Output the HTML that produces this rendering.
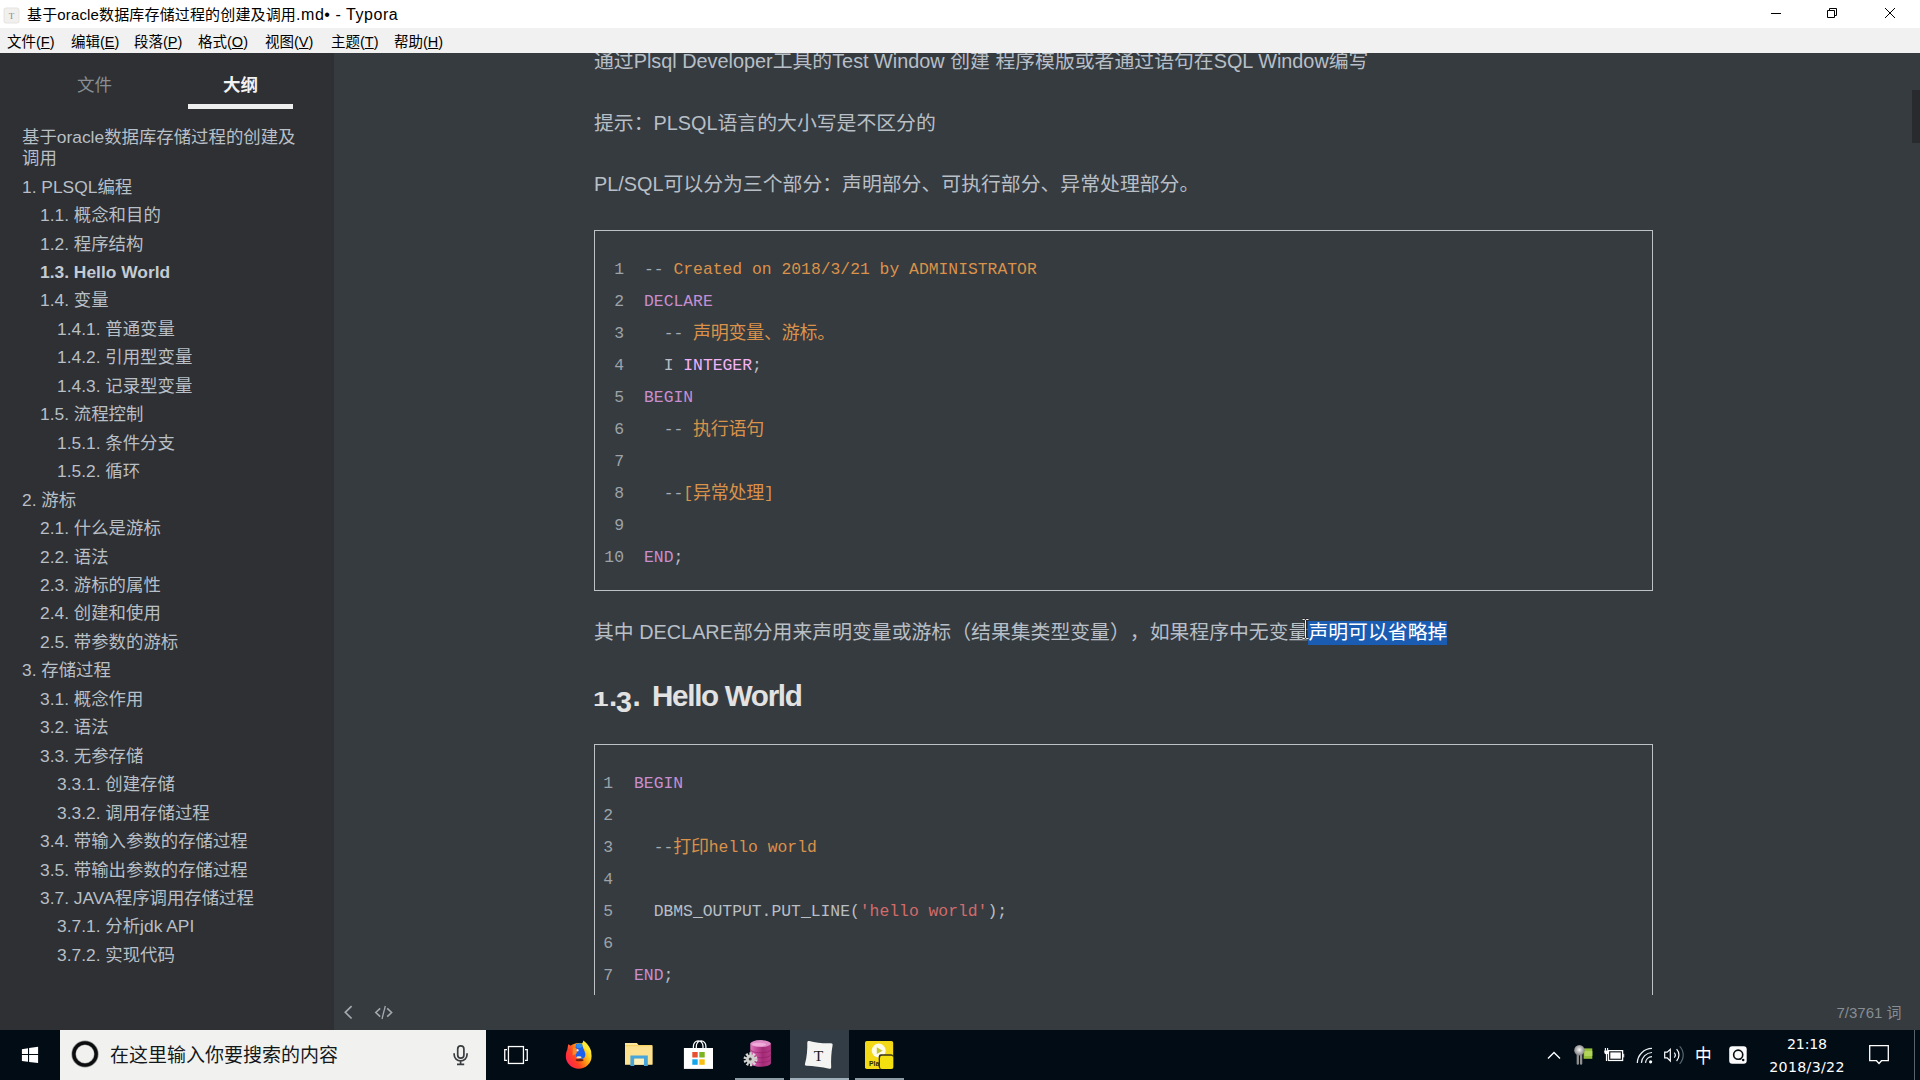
<!DOCTYPE html>
<html lang="zh-CN">
<head>
<meta charset="utf-8">
<title>基于oracle数据库存储过程的创建及调用.md - Typora</title>
<style>
*{box-sizing:border-box;margin:0;padding:0}
html,body{width:1920px;height:1080px;overflow:hidden;background:#363b40}
body{position:relative;text-spacing-trim:space-all;font-family:"Liberation Sans","Noto Sans CJK SC",sans-serif;color:#b8bfc6}
.abs{position:absolute}
/* ---------- title bar ---------- */
#titlebar{position:absolute;left:0;top:0;width:1920px;height:28px;background:#fff;color:#000}
#titlebar .ttl{position:absolute;left:27px;top:4px;font-size:15px;line-height:22px;white-space:nowrap;letter-spacing:.15px}
#menubar{position:absolute;left:0;top:28px;width:1920px;height:25px;background:#f0f1f0;color:#000}
#menubar span{position:absolute;top:3px;font-size:14.5px;line-height:22px;white-space:nowrap}
/* ---------- sidebar ---------- */
#sidebar{position:absolute;left:0;top:53px;width:334px;height:977px;background:#2e3033;color:#b8bfc6}
#sidebar .tab{position:absolute;top:19.6px;font-size:17.5px;line-height:24px;white-space:nowrap}
#sidebar .tabline{position:absolute;left:188px;top:51px;width:105px;height:5px;background:#eeeeee}
.ol{position:absolute;font-size:17.4px;line-height:21px;white-space:nowrap;color:#b8bfc6}
.ol.b{font-weight:bold;color:#c4cbd2}
/* ---------- content ---------- */
#content{position:absolute;left:334px;top:53px;width:1586px;height:942px;background:#363b40;overflow:hidden}
.p{position:absolute;left:260px;font-size:19.85px;line-height:30px;white-space:nowrap;color:#b8bfc6}
.fence{position:absolute;left:260px;width:1059px;border:1px solid #bcc2c6;font-family:"Liberation Mono","Noto Sans CJK SC",monospace;font-size:16.37px}
.fence .ln{position:absolute;height:32px;line-height:32px;white-space:pre;color:#b8bfc6}
.fence .n{position:absolute;color:#9da3a8;text-align:right;height:32px;line-height:32px}
.d{color:#a4abb1}.k{color:#c88fd0}.c{color:#da924a}.s{color:#d26b6b}.bi{color:#f3b3f8}
.cj{font-family:"Noto Sans CJK SC",sans-serif;font-size:18px;letter-spacing:-.25px;line-height:0;position:relative;top:1px}
h3{position:absolute;left:260px;font-size:29.6px;line-height:40px;color:#e2e2e2;font-weight:bold;white-space:nowrap;letter-spacing:-1.3px}
.os{position:absolute;top:0;line-height:40px;letter-spacing:0}.hw{position:absolute;left:58px;top:0}
.sel{background:#1b5cb3;color:#fff;padding-bottom:2px}
#footer{position:absolute;left:334px;top:995px;width:1586px;height:35px;background:#363b40}
/* ---------- taskbar ---------- */
#taskbar{position:absolute;left:0;top:1030px;width:1920px;height:50px;background:#020c15}
#search{position:absolute;left:60px;top:0;width:426px;height:50px;background:#f1f2f0;color:#1f2a33}
#search .t{position:absolute;left:50px;top:13px;font-size:19px;color:#15181b;line-height:26px;white-space:nowrap}
</style>
</head>
<body>
<!-- TITLE BAR -->
<div id="titlebar">
  <svg class="abs" style="left:3px;top:6.5px" width="17" height="17" viewBox="0 0 16 16"><rect x="1" y="1" width="14" height="14" rx="2" fill="#f1f0ee" stroke="#e6e4e0" stroke-width="1"/><text x="8" y="11.2" font-size="8.5" text-anchor="middle" fill="#888" font-family="Liberation Serif,serif">T</text></svg>
  <div class="ttl">基于oracle数据库存储过程的创建及调用<span style="font-size:16px;letter-spacing:.55px">.md• - Typora</span></div>
  <svg class="abs" style="left:1760px;top:0" width="160" height="28" viewBox="0 0 160 28" fill="none" stroke="#000" stroke-width="1">
    <path d="M11 13.5h10"/>
    <path d="M67.5 10.5h7v7h-7z M69.5 10.5v-2h7v7h-2"/>
    <path d="M125 8l10 10M135 8l-10 10"/>
  </svg>
</div>
<div id="menubar">
  <span style="left:7px">文件(<u>F</u>)</span>
  <span style="left:71px">编辑(<u>E</u>)</span>
  <span style="left:134px">段落(<u>P</u>)</span>
  <span style="left:198px">格式(<u>O</u>)</span>
  <span style="left:265px">视图(<u>V</u>)</span>
  <span style="left:331px">主题(<u>T</u>)</span>
  <span style="left:394px">帮助(<u>H</u>)</span>
</div>

<!-- SIDEBAR -->
<div id="sidebar">
  <div class="tab" style="left:77px;color:#8a8f94">文件</div>
  <div class="tab" style="left:223px;color:#f2f2f2;font-weight:bold">大纲</div>
  <div class="tabline"></div>
  <div class="ol" style="left:22px;top:73.5px">基于oracle数据库存储过程的创建及<br>调用</div>
  <div class="ol" style="left:22px;top:123.5px">1. PLSQL编程</div>
  <div class="ol" style="left:40px;top:152.0px">1.1. 概念和目的</div>
  <div class="ol" style="left:40px;top:180.5px">1.2. 程序结构</div>
  <div class="ol b" style="left:40px;top:208.9px">1.3. Hello World</div>
  <div class="ol" style="left:40px;top:237.4px">1.4. 变量</div>
  <div class="ol" style="left:57px;top:265.8px">1.4.1. 普通变量</div>
  <div class="ol" style="left:57px;top:294.3px">1.4.2. 引用型变量</div>
  <div class="ol" style="left:57px;top:322.7px">1.4.3. 记录型变量</div>
  <div class="ol" style="left:40px;top:351.2px">1.5. 流程控制</div>
  <div class="ol" style="left:57px;top:379.6px">1.5.1. 条件分支</div>
  <div class="ol" style="left:57px;top:408.1px">1.5.2. 循环</div>
  <div class="ol" style="left:22px;top:436.6px">2. 游标</div>
  <div class="ol" style="left:40px;top:465.0px">2.1. 什么是游标</div>
  <div class="ol" style="left:40px;top:493.5px">2.2. 语法</div>
  <div class="ol" style="left:40px;top:521.9px">2.3. 游标的属性</div>
  <div class="ol" style="left:40px;top:550.4px">2.4. 创建和使用</div>
  <div class="ol" style="left:40px;top:578.8px">2.5. 带参数的游标</div>
  <div class="ol" style="left:22px;top:607.3px">3. 存储过程</div>
  <div class="ol" style="left:40px;top:635.7px">3.1. 概念作用</div>
  <div class="ol" style="left:40px;top:664.2px">3.2. 语法</div>
  <div class="ol" style="left:40px;top:692.6px">3.3. 无参存储</div>
  <div class="ol" style="left:57px;top:721.1px">3.3.1. 创建存储</div>
  <div class="ol" style="left:57px;top:749.6px">3.3.2. 调用存储过程</div>
  <div class="ol" style="left:40px;top:778.0px">3.4. 带输入参数的存储过程</div>
  <div class="ol" style="left:40px;top:806.5px">3.5. 带输出参数的存储过程</div>
  <div class="ol" style="left:40px;top:834.9px">3.7. JAVA程序调用存储过程</div>
  <div class="ol" style="left:57px;top:863.4px">3.7.1. 分析jdk API</div>
  <div class="ol" style="left:57px;top:891.8px">3.7.2. 实现代码</div>
</div>

<!-- CONTENT -->
<div id="content">
  <div class="p" style="top:-7px">通过Plsql Developer工具的Test Window 创建 程序模版或者通过语句在SQL Window编写</div>
  <div class="p" style="top:55px">提示：PLSQL语言的大小写是不区分的</div>
  <div class="p" style="top:116px">PL/SQL可以分为三个部分：声明部分、可执行部分、异常处理部分。</div>
  <div class="fence" style="top:177px;height:361px">
  <div class="n" style="left:0;width:29px;top:23px">1</div><div class="ln" style="left:49px;top:23px"><span class="d">--</span><span class="c"> Created on 2018/3/21 by ADMINISTRATOR</span></div>
  <div class="n" style="left:0;width:29px;top:55px">2</div><div class="ln" style="left:49px;top:55px"><span class="k">DECLARE</span></div>
  <div class="n" style="left:0;width:29px;top:87px">3</div><div class="ln" style="left:49px;top:87px">  <span class="d">--</span><span class="c"> <span class="cj">声明变量、游标。</span></span></div>
  <div class="n" style="left:0;width:29px;top:119px">4</div><div class="ln" style="left:49px;top:119px">  I <span class="bi">INTEGER</span>;</div>
  <div class="n" style="left:0;width:29px;top:151px">5</div><div class="ln" style="left:49px;top:151px"><span class="k">BEGIN</span></div>
  <div class="n" style="left:0;width:29px;top:183px">6</div><div class="ln" style="left:49px;top:183px">  <span class="d">--</span><span class="c"> <span class="cj">执行语句</span></span></div>
  <div class="n" style="left:0;width:29px;top:215px">7</div><div class="ln" style="left:49px;top:215px"></div>
  <div class="n" style="left:0;width:29px;top:247px">8</div><div class="ln" style="left:49px;top:247px">  <span class="d">--</span><span class="c">[<span class="cj">异常处理</span>]</span></div>
  <div class="n" style="left:0;width:29px;top:279px">9</div><div class="ln" style="left:49px;top:279px"></div>
  <div class="n" style="left:0;width:29px;top:311px">10</div><div class="ln" style="left:49px;top:311px"><span class="k">END</span>;</div>
  </div>
  <div class="p" style="top:564px">其中 DECLARE部分用来声明变量或游标（结果集类型变量），如果程序中无变量<span class="sel">声明可以省略掉</span></div>
  <h3 style="top:623px"><span class="os" style="left:-1px;top:2.9px;font-size:.7em;transform:scaleX(1.35);transform-origin:0 50%">1</span><span class="os" style="left:15px">.</span><span class="os" style="left:22px;top:6.3px;font-size:.97em">3</span><span class="os" style="left:38.500px">.</span> <span class="hw">Hello World</span></h3>
  <div class="fence" style="top:691px;height:300px">
  <div class="n" style="left:0;width:18px;top:23px">1</div><div class="ln" style="left:39px;top:23px"><span class="k">BEGIN</span></div>
  <div class="n" style="left:0;width:18px;top:55px">2</div><div class="ln" style="left:39px;top:55px"></div>
  <div class="n" style="left:0;width:18px;top:87px">3</div><div class="ln" style="left:39px;top:87px">  <span class="d">--</span><span class="c"><span class="cj">打印</span>hello world</span></div>
  <div class="n" style="left:0;width:18px;top:119px">4</div><div class="ln" style="left:39px;top:119px"></div>
  <div class="n" style="left:0;width:18px;top:151px">5</div><div class="ln" style="left:39px;top:151px">  DBMS_OUTPUT.PUT_LINE(<span class="s">'hello world'</span>);</div>
  <div class="n" style="left:0;width:18px;top:183px">6</div><div class="ln" style="left:39px;top:183px"></div>
  <div class="n" style="left:0;width:18px;top:215px">7</div><div class="ln" style="left:39px;top:215px"><span class="k">END</span>;</div>
  <div class="n" style="left:0;width:18px;top:247px">8</div><div class="ln" style="left:39px;top:247px"></div>
  </div>
</div>
<div class="abs" style="left:1912px;top:90px;width:8px;height:53px;background:#282a2e"></div>
<svg class="abs" style="left:1300px;top:617px" width="11" height="24" viewBox="0 0 11 24" fill="none"><path d="M2.500 2.500h2.200l.8.800.800-.800h2.200M5.500 3.300v17.400M2.500 21.500h2.200l.800-.800.800.800h2.200" stroke="#1a1a1a" stroke-width="2.100"/><path d="M2.500 2.500h2.200l.8.800.800-.800h2.200M5.500 3.300v17.400M2.500 21.500h2.200l.800-.800.800.800h2.200" stroke="#fff" stroke-width=".95"/></svg>
<div id="footer">
  <svg class="abs" style="left:0;top:0" width="70" height="35" viewBox="0 0 70 35" fill="none" stroke="#a2a9af" stroke-width="1.700">
    <path d="M17.600 11.200L11.300 17.300l6.300 6.200"/>
    <path d="M46.200 13.400L41.800 17.500l4.400 4.200M53.200 13.400l4.400 4.100-4.400 4.200" stroke-width="1.600"/><path d="M51.300 11L48 24" stroke-width="1.300"/>
  </svg>
  <div class="abs" style="right:18.5px;top:7px;font-size:15px;line-height:22px;color:#868d93;white-space:nowrap">7/3761 词</div>
</div>

<!-- TASKBAR -->
<div id="taskbar">
  <svg class="abs" style="left:10px;top:5px" width="40" height="40" viewBox="0 0 40 40"><path fill="#fff" d="M11.900 14.200L18 13.200V18.900H11.900zM19.100 13L28.100 11.800V18.900H19.100zM11.900 20H18V26.800L11.900 25.900zM19.100 20H28.100V28.100L19.100 27z"/></svg>
  <div id="search">
    <svg class="abs" style="left:10px;top:9px" width="30" height="30" viewBox="0 0 30 30"><circle cx="15" cy="15" r="11.300" fill="none" stroke="#8d8f8e" stroke-width="4.600"/><circle cx="15" cy="15" r="11.200" fill="none" stroke="#0b0d0e" stroke-width="3.300"/></svg>
    <div class="t">在这里输入你要搜索的内容</div>
    <svg class="abs" style="left:390px;top:12px" width="22" height="26" viewBox="0 0 22 26" fill="none" stroke="#3a3d40" stroke-width="1.700"><rect x="7.700" y="3.900" width="6.200" height="12.200" rx="3.100"/><path d="M4.150 11.300v1.200a6.450 6.450 0 0 0 12.900 0v-1.200M10.600 19v3M7 22.300h7.200"/></svg>
  </div>
  <!-- task view -->
  <svg class="abs" style="left:503px;top:15px" width="26" height="20" viewBox="0 0 26 20" fill="none" stroke="#fff" stroke-width="1.300"><rect x="5.450" y="1.550" width="15" height="16.900"/><path d="M4 4.550H1.750v10.900H4M22 4.550h2.250v10.900H22"/></svg>
  <!-- firefox -->
  <svg class="abs" style="left:558px;top:5px" width="40" height="40" viewBox="0 0 40 40">
    <defs><linearGradient id="ffg" x1="0.080" y1="0.720" x2="0.950" y2="0.220"><stop offset="0" stop-color="#ff2748"/><stop offset="0.300" stop-color="#ff4322"/><stop offset="0.580" stop-color="#ff9412"/><stop offset="0.820" stop-color="#ffd426"/><stop offset="1" stop-color="#fff14d"/></linearGradient></defs>
    <circle cx="20.700" cy="20.900" r="12.900" fill="url(#ffg)"/>
    <path d="M23.300 9.500C24.600 8.400 25.100 7 25.300 5.600 28.500 8 32.300 12 33.500 17.500L28 15z" fill="#ffe936"/>
    <path d="M10.200 9.300L13.800 11.300 9.300 15z" fill="#ff5436"/>
    <path d="M18 9.300C20 8.100 22.600 8.200 24.100 9.100 24.500 12 26 14.600 27 17.500 28 20.500 26.900 23 24.500 23.800 22 24.100 19.500 23.100 18 21.500 17.300 18 17.200 13 18 9.300z" fill="#1c60ee"/>
    <ellipse cx="21.200" cy="10.800" rx="3" ry="2.300" fill="#2a8de8"/>
    <path d="M15 12.500c2-.3 3.500.500 4.300 2.200l-1 4.300-3.800 1.500z" fill="#ff8a26"/>
    <ellipse cx="19.600" cy="15.200" rx="1" ry="1.300" fill="#d9e6ff"/>
    <ellipse cx="21" cy="22.300" rx="2.600" ry="1" fill="#ffe7bd"/>
    <ellipse cx="21.600" cy="25.200" rx="3.900" ry="1.100" fill="#6b1a14"/>
  </svg>
  <!-- explorer -->
  <svg class="abs" style="left:618px;top:5px" width="40" height="40" viewBox="0 0 40 40">
    <path d="M7 8h11.800l1.800 2H34.400v19.600H7z" fill="#f6d362"/>
    <path d="M7 11.200h27.400v18.400H7z" fill="#fbe190"/>
    <path d="M7 8h11.600l1.600 2H7z" fill="#fbe79f"/>
    <path d="M12.400 20.400h17.400v10.500h-3.900v-7.200h-9.600v7.200h-3.900z" fill="#46a6dc"/>
    <rect x="16.300" y="23.700" width="9.600" height="5.900" fill="#fdf0b8"/>
  </svg>
  <!-- store -->
  <svg class="abs" style="left:678px;top:5px" width="40" height="40" viewBox="0 0 40 40">
    <path d="M15.400 13.500v-2.300a4.800 5.400 0 0 1 9.600 0v2.300M18.300 13.500v-2.300a4.800 5.400 0 0 1 9.600 0v2.300" fill="none" stroke="#fff" stroke-width="1.250"/>
    <rect x="5.900" y="13" width="29.100" height="20.900" fill="#fff"/>
    <rect x="14.300" y="17" width="5.400" height="5.500" fill="#e8502f"/><rect x="21.300" y="17" width="5.400" height="5.500" fill="#7cb421"/>
    <rect x="14.300" y="24.300" width="5.400" height="5.500" fill="#12a6ea"/><rect x="21.300" y="24.300" width="5.400" height="5.500" fill="#f8bd10"/>
  </svg>
  <!-- db icon -->
  <svg class="abs" style="left:738px;top:5px" width="40" height="40" viewBox="0 0 40 40">
    <defs><linearGradient id="dbg" x1="0" x2="1"><stop offset="0" stop-color="#dc7cba"/><stop offset="0.250" stop-color="#c9509f"/><stop offset="0.600" stop-color="#a32b76"/><stop offset="1" stop-color="#b53a87"/></linearGradient></defs>
    <path d="M12.300 8.500v19.500c0 2.200 4.600 3.700 10.300 3.700s10.300-1.500 10.300-3.700V8.500z" fill="url(#dbg)"/>
    <ellipse cx="22.600" cy="8.600" rx="10.300" ry="3.500" fill="#df8cc6"/>
    <ellipse cx="21" cy="9.500" rx="7" ry="1.800" fill="#f4b3df" opacity=".8"/>
    <path d="M12.300 14.300c0 2 4.600 3.400 10.300 3.400s10.300-1.400 10.300-3.400M12.300 19.300c0 2 4.600 3.400 10.300 3.400s10.300-1.400 10.300-3.400M12.300 24c0 2 4.600 3.400 10.300 3.400s10.300-1.400 10.300-3.400" fill="none" stroke="#8f1f63" stroke-width=".9" opacity=".7"/>
    <circle cx="12.500" cy="24.300" r="5.600" fill="none" stroke="#d6d6d4" stroke-width="2.800" stroke-dasharray="2.100 1.420"/>
    <circle cx="12.500" cy="24.300" r="4.700" fill="#cfcfcd"/>
    <circle cx="12.200" cy="24" r="1.500" fill="#3e3a38"/>
  </svg>
  <!-- typora active -->
  <div class="abs" style="left:790px;top:0;width:59px;height:50px;background:#323d45"></div>
  <svg class="abs" style="left:798px;top:5px" width="40" height="40" viewBox="0 0 40 40">
    <path d="M9.300 7.200C9.500 6.200 10.300 5.700 11.300 6 18 8 26 8.600 33 8.300 34.200 8.300 34.800 9 34.600 10.200 33.300 17 32.800 25 33.200 32 33.300 33.300 32.600 34 31.300 33.700 24 32 15 31 8.500 30.800 7.200 30.800 6.600 30 7 28.800 9 22 9.500 14 9.300 7.200z" fill="#f4f4f3"/>
    <text x="20.400" y="25.900" font-size="15.500" text-anchor="middle" fill="#1c1c1c" font-family="Liberation Serif,serif">T</text>
  </svg>
  <!-- yellow player -->
  <svg class="abs" style="left:858px;top:5px" width="40" height="40" viewBox="0 0 40 40">
    <rect x="7" y="5.900" width="28.200" height="28.100" rx="1.800" fill="#f3d916"/>
    <circle cx="20.700" cy="15.600" r="7" fill="#fffbe6"/>
    <path d="M18.800 12.300l5.800 3.400-5.800 3.400z" fill="#c3c52f"/>
    <text x="11" y="30.600" font-size="6.800" font-weight="bold" fill="#2e2800" font-family="Liberation Sans,sans-serif">Pla</text>
    <rect x="20.700" y="19.300" width="14.500" height="14.700" rx="2.200" fill="#37351c"/>
    <rect x="22" y="20.700" width="13.200" height="13.300" rx="2" fill="#f4e00f"/>
  </svg>
  <div class="abs" style="left:735px;top:48px;width:49px;height:2px;background:#8c9ba4"></div>
  <div class="abs" style="left:790px;top:48px;width:59px;height:2px;background:#9fb0ba"></div>
  <div class="abs" style="left:855px;top:48px;width:49px;height:2px;background:#8c9ba4"></div>
  <!-- tray -->
  <svg class="abs" style="left:1546px;top:19px" width="16" height="12" viewBox="0 0 16 12" fill="none" stroke="#fff" stroke-width="1.400"><path d="M2 9.500l6-6 6 6"/></svg>
  <svg class="abs" style="left:1573px;top:14px" width="22" height="22" viewBox="0 0 22 22">
    <defs><radialGradient id="pg" cx=".5" cy=".45" r=".55"><stop offset="0" stop-color="#fafafa"/><stop offset=".35" stop-color="#c9c9c9"/><stop offset="1" stop-color="#7f7f7f"/></radialGradient></defs>
    <rect x="10.600" y="4.400" width="8.700" height="10.400" fill="#96c038"/><rect x="11.500" y="7" width="7.800" height="5" fill="#b2d45a"/>
    <path d="M4.800 10.500v9.200M8.100 10.500v9.200" stroke="#8f8f8f" stroke-width="2.300" stroke-linecap="round" fill="none"/>
    <circle cx="6.400" cy="6.300" r="5.200" fill="url(#pg)"/>
  </svg>
  <svg class="abs" style="left:1603px;top:16px" width="24" height="18" viewBox="0 0 24 18" fill="none" stroke="#fff">
    <rect x="5.500" y="4.650" width="14.100" height="9.800" stroke-width="1.300"/>
    <rect x="7.300" y="6.400" width="10.500" height="6.300" fill="#fdfdfd" stroke="none"/>
    <rect x="20.200" y="7.800" width="1" height="3.600" fill="#fff" stroke="none"/>
    <path d="M2.400 2v2.800M4.600 2v2.800" stroke-width="1.100"/>
    <path d="M1.200 4.600h4.600v1.500a2.300 2.300 0 0 1-4.600 0z" fill="#fff" stroke="none"/>
    <path d="M3.500 8v7" stroke-width="1.200"/>
  </svg>
  <svg class="abs" style="left:1635px;top:16px" width="20" height="18" viewBox="0 0 20 18" fill="none" stroke="#f1f4f6" stroke-width="1.250">
    <path d="M2.300 16.900A15 15 0 0 1 17 2.400M6.400 16.900A11 11 0 0 1 17 6.500M10.500 16.900A6.900 6.900 0 0 1 17 10.600"/><circle cx="15.600" cy="15.800" r="1.600" fill="#fff" stroke="none"/>
  </svg>
  <svg class="abs" style="left:1662px;top:14px" width="24" height="22" viewBox="0 0 24 22" fill="none" stroke="#fff" stroke-width="1.200">
    <path d="M2.700 8.100H5.200L8.300 5.300V17L5.200 13.900H2.700z"/><path d="M12.200 8.700a3.700 3.700 0 0 1 0 5M14.600 5.200a8.600 8.600 0 0 1 0 11.800"/><path d="M17.700 2.400a12.600 12.600 0 0 1 0 17.400" stroke="#566671"/>
  </svg>
  <div class="abs" style="left:1693.7px;top:12.5px;width:18px;text-align:center;font-size:18.5px;line-height:24px;color:#fff;font-family:'Noto Sans CJK SC',sans-serif;transform:scale(.9,1.05)">中</div>
  <svg class="abs" style="left:1729px;top:16px" width="19" height="19" viewBox="0 0 19 19">
    <rect x=".2" y=".3" width="17.500" height="17.500" rx="3" fill="#fbfbfb"/>
    <circle cx="9.200" cy="8.700" r="4.550" fill="none" stroke="#0a0f13" stroke-width="1.650"/><path d="M10.800 12.200l2 1.200-2.600.4z" fill="#0a0f13"/><circle cx="14.200" cy="13.900" r="1.250" fill="#0a0f13"/>
  </svg>
  <div class="abs" style="left:1757px;top:3px;width:100px;text-align:center;font-family:'DejaVu Sans','Liberation Sans',sans-serif;font-size:14.2px;line-height:22px;color:#fff;white-space:nowrap;letter-spacing:-.2px">21:18</div>
  <div class="abs" style="left:1757px;top:25.500px;width:100px;text-align:center;font-family:'DejaVu Sans','Liberation Sans',sans-serif;font-size:14.2px;line-height:22px;color:#fff;white-space:nowrap;letter-spacing:.3px">2018/3/22</div>
  <svg class="abs" style="left:1868px;top:14px" width="22" height="22" viewBox="0 0 22 22" fill="none" stroke="#fff" stroke-width="1.300"><path d="M1.700 1.700h18.600v15H13.500L11 19.500 8.500 16.700H1.700z"/></svg>
  <div class="abs" style="left:1914px;top:0;width:1px;height:50px;background:#59636b"></div>
</div>
</body>
</html>
